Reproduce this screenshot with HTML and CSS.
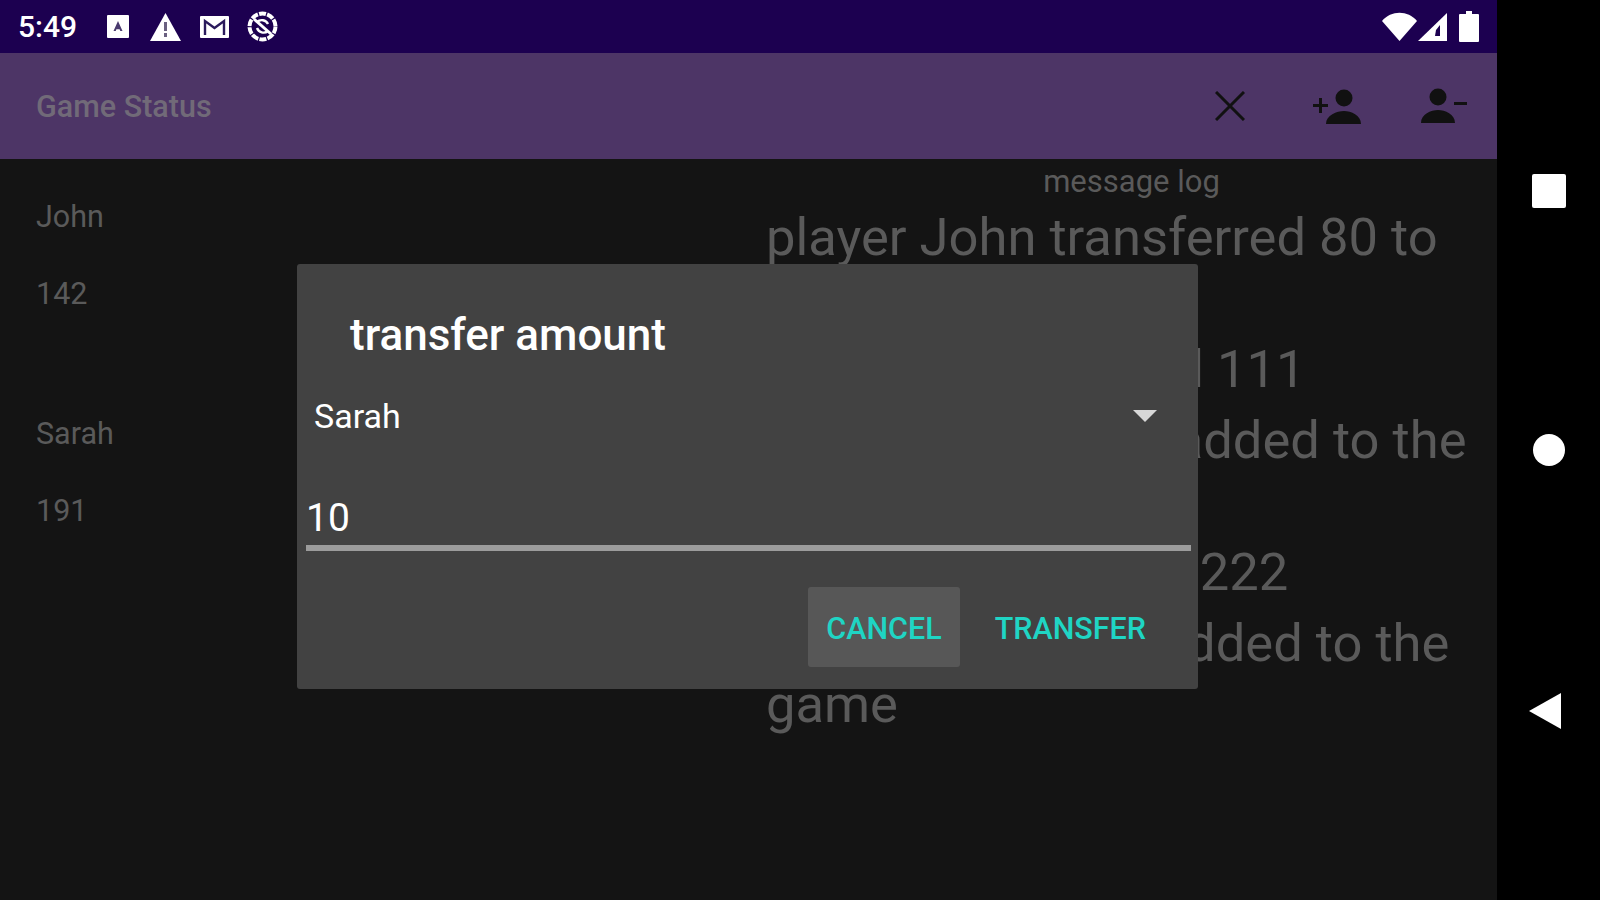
FILE: index.html
```html
<!DOCTYPE html>
<html lang="en">
<head>
    <meta charset="UTF-8">
    <title>Game Status</title>
    <link rel="stylesheet" href="styles.css">
</head>
<body>

<div class="device">
    <div class="screen">
        <!-- status bar -->
        <div class="status-bar">
            <span class="clock">5:49</span>
            <div class="status-icons">
                <svg width="22" height="23" viewBox="0 0 22 23"><path fill="#fff" d="M1 0h20a1 1 0 0 1 1 1v21a1 1 0 0 1-1 1H1a1 1 0 0 1-1-1V1a1 1 0 0 1 1-1z"/><path fill="#4a3a6e" d="M11 6l4.5 10h-2.2l-.7-1.8H9.400l-.7 1.8H6.500z"/></svg>
                <svg class="warn-icon" width="31" height="28" viewBox="0 0 31 28"><path fill="#fff" d="M15.500 0L31 28H0z"/><path fill="#6a6080" d="M14 9h3v9h-3zM14 20h3v4h-3z"/></svg>
                <svg width="29" height="22" viewBox="0 0 29 22"><path fill="#fff" d="M1 0h27a1 1 0 0 1 1 1v20a1 1 0 0 1-1 1H1a1 1 0 0 1-1-1V1a1 1 0 0 1 1-1z"/><path fill="none" stroke="#2a1a5c" stroke-width="2.400" d="M5 19V5l9.500 7L24 5v14"/></svg>
                <svg class="sync-icon" width="31" height="31" viewBox="0 0 31 31"><circle cx="15.500" cy="15.500" r="13" fill="none" stroke="#fff" stroke-width="4" stroke-dasharray="7 1.200"/><path stroke="#fff" stroke-width="3" d="M7 8l17 15"/><path fill="none" stroke="#fff" stroke-width="2.400" d="M10 11a7 7 0 0 1 11 2M21 20a7 7 0 0 1-11-3"/></svg>
            </div>
            <div class="status-right">
                <svg class="wifi" width="35" height="29" viewBox="0 0 35 29"><path fill="#fff" d="M0 9C9 -2 26 -2 35 9L17.500 29z"/></svg>
                <svg class="signal" width="29" height="28" viewBox="0 0 29 28"><path fill="#fff" d="M29 0v28H0z"/><path fill="#1c0050" d="M22 12v11h-5l1-6z"/></svg>
                <svg width="20" height="31" viewBox="0 0 20 31"><path fill="#fff" d="M7 0h6v3h6a1 1 0 0 1 1 1v26a1 1 0 0 1-1 1H1a1 1 0 0 1-1-1V4a1 1 0 0 1 1-1h6z"/></svg>
            </div>
        </div>

        <!-- app bar -->
        <div class="app-bar">
            <span class="app-title">Game Status</span>
            <div class="app-actions">
                <svg class="close-icon" width="30" height="30" viewBox="0 0 30 30"><path fill="none" stroke="#111" stroke-width="3" d="M1 1l28 28M29 1L1 29"/></svg>
                <svg class="add-icon" width="48" height="36" viewBox="0 0 48 36"><circle cx="31" cy="9" r="8.500" fill="#111"/><path fill="#111" d="M13 35c0-9 11-13 18-13s17 4 17 13zM6 9h3v6h6v3H9v6H6v-6H0v-3h6z"/></svg>
                <svg width="46" height="36" viewBox="0 0 46 36"><circle cx="17" cy="9" r="8.500" fill="#111"/><path fill="#111" d="M0 35c0-9 10-13 17-13s17 4 17 13zM33 14h13v3H33z"/></svg>
            </div>
        </div>

        <div class="content">
            <div class="players">
                <div class="player">
                    <div class="player-name">John</div>
                    <div class="player-score">142</div>
                </div>
                <div class="player">
                    <div class="player-name">Sarah</div>
                    <div class="player-score">191</div>
                </div>
            </div>
            <div class="log">
                <div class="log-title">message log</div>
                <p>player John transferred 80 to Sarah</p>
                <p>player Sarah's fund 111</p>
                <p>player Sarah was added to the game</p>
                <p>player John's fund 222</p>
                <p>player John was added to the game</p>
            </div>
        </div>

        <!-- dialog -->
        <div class="dialog">
            <h2 class="dialog-title">transfer amount</h2>
            <div class="spinner">
                <span>Sarah</span>
                <span class="arrow"></span>
            </div>
            <div class="amount">10</div>
            <div class="dialog-buttons">
                <span class="btn btn-focus">CANCEL</span>
                <span class="btn">TRANSFER</span>
            </div>
        </div>
    </div>

    <!-- nav bar -->
    <div class="nav-bar">
        <span class="nav-square"></span>
        <span class="nav-circle"></span>
        <svg class="nav-back" width="34" height="38" viewBox="0 0 34 38"><path fill="#fff" d="M33 1v36L1 19z"/></svg>
    </div>
</div>

</body>
</html>
```

FILE: styles.css
```css
* {
    padding: 0;
    margin: 0;
    box-sizing: border-box;
}

body {
    font-family: Roboto, Arial, sans-serif;
    background-color: #000;
    overflow: hidden;
}

.device {
    display: flex;
    width: 1600px;
    height: 900px;
}

.screen {
    position: relative;
    width: 1497px;
    height: 900px;
    background-color: #141414;
    display: flex;
    flex-direction: column;
}

.status-bar {
    height: 53px;
    background-color: #1c0050;
    display: flex;
    align-items: center;
    padding: 0 18px 0 18px;
    color: #fff;
}

.clock {
    font-size: 30px;
    font-weight: 500;
    width: 58px;
}

.status-icons {
    display: flex;
    align-items: center;
    gap: 19px;
    margin-left: 31px;
}

.warn-icon {
    margin-left: 2px;
}

.sync-icon {
    margin-left: -1px;
}

.status-right {
    display: flex;
    align-items: center;
    margin-left: auto;
}

.signal {
    margin: 0 12px 0 1px;
}

.app-bar {
    height: 106px;
    background-color: #4d3566;
    display: flex;
    align-items: center;
    justify-content: space-between;
    padding: 0 30px 0 36px;
}

.app-title {
    font-size: 30.500px;
    font-weight: 500;
    color: #716a78;
}

.app-actions {
    display: flex;
    align-items: center;
    gap: 59px;
}

.close-icon {
    margin-right: 9px;
}

.add-icon {
    margin-top: 1px;
    margin-right: 1px;
}

.content {
    flex: 1;
    display: flex;
    color: #5a5a5a;
}

.players {
    width: 766px;
    padding: 40px 0 0 36px;
}

.player {
    height: 217px;
    font-size: 30.500px;
}

.player-name {
    margin-bottom: 42px;
}

.log {
    flex: 1;
}

.log-title {
    font-size: 31px;
    text-align: center;
    margin-top: 4px;
}

.log p {
    font-size: 52.500px;
    line-height: 61px;
    margin-bottom: 10px;
    padding-right: 20px;
}

.log-title + p {
    margin-top: 7px;
}

.dialog {
    position: absolute;
    left: 297px;
    top: 264px;
    width: 901px;
    height: 425px;
    background-color: #424242;
    border-radius: 3px;
    display: flex;
    flex-direction: column;
}

.dialog-title {
    font-size: 44px;
    font-weight: 500;
    color: #fff;
    margin: 46px 0 0 53px;
    line-height: 50px;
}

.spinner {
    display: flex;
    align-items: center;
    justify-content: space-between;
    margin: 34px 41px 0 17px;
    font-size: 34px;
    color: #fff;
    height: 44px;
}

.arrow {
    width: 0;
    height: 0;
    border-left: 12px solid transparent;
    border-right: 12px solid transparent;
    border-top: 12px solid #d8d8d8;
}

.amount {
    margin: 55px 7px 0 9px;
    font-size: 39px;
    color: #fff;
    height: 58px;
    line-height: 50px;
    border-bottom: 6px solid #9c9c9c;
}

.dialog-buttons {
    display: flex;
    justify-content: flex-end;
    align-items: center;
    gap: 18px;
    margin: 36px 35px 0 0;
}

.btn {
    height: 80px;
    line-height: 83px;
    padding: 0 17px;
    font-size: 30.500px;
    font-weight: 500;
    color: #1fd5c4;
    border-radius: 3px;
}

.btn-focus {
    background-color: #575757;
    padding: 0 18px;
}

.nav-bar {
    flex: 1;
    display: flex;
    flex-direction: column;
    align-items: center;
    padding-top: 174px;
    gap: 226px;
}

.nav-square {
    width: 34px;
    height: 34px;
    background-color: #fff;
    border-radius: 2px;
}

.nav-circle {
    width: 32px;
    height: 32px;
    background-color: #fff;
    border-radius: 50%;
}

.nav-back {
    margin-right: 7px;
}
```
